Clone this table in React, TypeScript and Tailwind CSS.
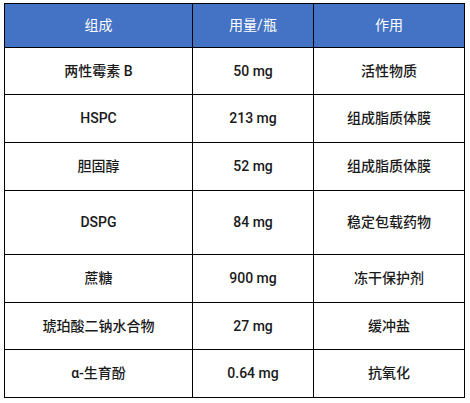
const rows: { name: string; dose: string; role: string; h: string }[] = [
  { name: '两性霉素 B', dose: '50 mg', role: '活性物质', h: 'h-[47px]' },
  { name: 'HSPC', dose: '213 mg', role: '组成脂质体膜', h: 'h-[48px]' },
  { name: '胆固醇', dose: '52 mg', role: '组成脂质体膜', h: 'h-[48px]' },
  { name: 'DSPG', dose: '84 mg', role: '稳定包载药物', h: 'h-[64px]' },
  { name: '蔗糖', dose: '900 mg', role: '冻干保护剂', h: 'h-[48px]' },
  { name: '琥珀酸二钠水合物', dose: '27 mg', role: '缓冲盐', h: 'h-[47px]' },
  { name: 'α-生育酚', dose: '0.64 mg', role: '抗氧化', h: 'h-[48px]' },
]

export default function App() {
  return (
    <div className="min-h-screen bg-white pl-[4px] pt-[3px] font-['Roboto','Noto_Sans_CJK_SC',sans-serif]">
      <table className="w-[461px] border-collapse text-center text-[14px]">
        <thead>
          <tr className="h-[44px] bg-[#4472c4] text-white">
            <th className="w-[188px] border border-black font-normal">组成</th>
            <th className="w-[121px] border border-black font-normal">用量/瓶</th>
            <th className="border border-black font-normal">作用</th>
          </tr>
        </thead>
        <tbody className="font-medium text-[#1a1a1a]">
          {rows.map((r) => (
            <tr key={r.name} className={r.h}>
              <td className="border border-black">{r.name}</td>
              <td className="border border-black">{r.dose}</td>
              <td className="border border-black">{r.role}</td>
            </tr>
          ))}
        </tbody>
      </table>
    </div>
  )
}
